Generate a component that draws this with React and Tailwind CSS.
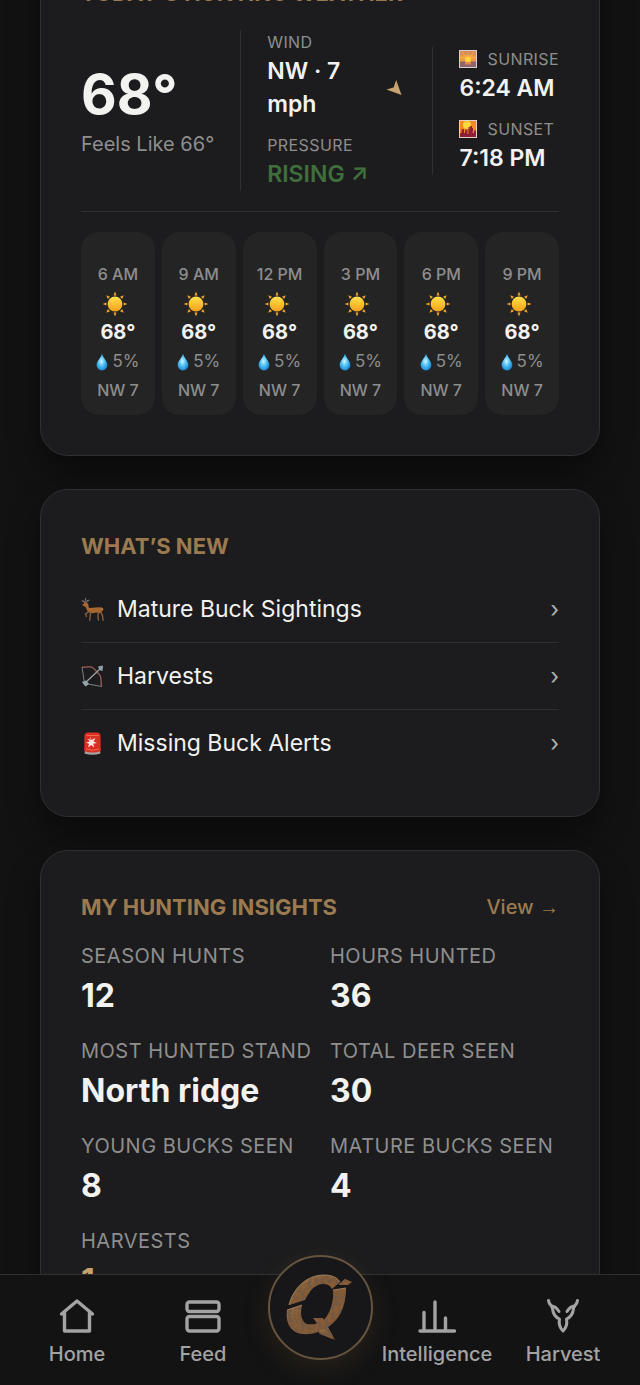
import React from 'react';

// --- PAGE DATA ---
const forecast = ['6 AM', '9 AM', '12 PM', '3 PM', '6 PM', '9 PM'].map((time) => ({
    time,
    temp: '68°',
    rain: '5%',
    wind: 'NW 7',
}));

const insights = [
    { label: 'Season Hunts', value: '12' },
    { label: 'Hours Hunted', value: '36' },
    { label: 'Most Hunted Stand', value: 'North ridge' },
    { label: 'Total Deer Seen', value: '30' },
    { label: 'Young Bucks Seen', value: '8' },
    { label: 'Mature Bucks Seen', value: '4' },
    { label: 'Harvests', value: '1', highlight: true },
];

// --- WEATHER ICONS ---
const SunIcon = () => (
    <svg viewBox="0 0 26 26" className="w-[26px] h-[26px] mr-1.5" aria-hidden="true">
        <defs>
            <linearGradient id="sun" x1="0" y1="0" x2="0" y2="1">
                <stop offset="0" stopColor="#ffe14a" />
                <stop offset="1" stopColor="#f5a01a" />
            </linearGradient>
        </defs>
        {[0, 45, 90, 135, 180, 225, 270, 315].map((angle) => (
            <path key={angle} d="M13 .6l1.5 3.8h-3z" fill="#f3a62b" transform={`rotate(${angle} 13 13)`} />
        ))}
        <circle cx="13" cy="13" r="7.4" fill="url(#sun)" />
    </svg>
);

const DropIcon = () => (
    <svg viewBox="0 0 12 18" className="w-3 h-[18px]" aria-hidden="true">
        <defs>
            <radialGradient id="drop" cx=".45" cy=".45" r=".6">
                <stop offset="0" stopColor="#d3f5ff" />
                <stop offset=".5" stopColor="#4fc0f5" />
                <stop offset="1" stopColor="#1683cf" />
            </radialGradient>
        </defs>
        <path d="M6 .8C7 4.800 11.400 8.200 11.400 12A5.400 5.400 0 0 1 .6 12C.6 8.200 5 4.800 6 .8z" fill="url(#drop)" />
    </svg>
);

const SunriseIcon = () => (
    <svg viewBox="0 0 18 18" className="w-[18px] h-[18px]" aria-hidden="true">
        <rect width="18" height="18" fill="#d8cfd0" />
        <rect x="1" y="1" width="16" height="5" fill="#d98a55" />
        <rect x="1" y="5" width="16" height="7" fill="#f09a3c" />
        <rect x="1" y="11.500" width="16" height="5.500" fill="#8f6670" />
        <path d="M9 9L3 2M9 9V2M9 9l6-7M9 9L2 7M9 9l7-2" stroke="#f7b765" strokeWidth=".8" />
        <circle cx="9" cy="9.500" r="3" fill="#ffd23f" />
        <rect x="6" y="12" width="6" height="2.500" fill="#e28a4a" />
    </svg>
);

const SunsetIcon = () => (
    <svg viewBox="0 0 18 18" className="w-[18px] h-[18px]" aria-hidden="true">
        <rect width="18" height="18" fill="#e5cfc4" />
        <rect x="1" y="1" width="16" height="16" fill="#f08a24" />
        <circle cx="8" cy="5" r="4" fill="#ffd83d" />
        <path d="M1 17v-4h1.500V9H5v4h1V9.500h2.500V14h1V7h1.500V6h2v2h1v5h1v-2.500h2V17z" fill="#8e2036" />
        <path d="M6 10h2M10 8h1.500M3 10h1M13 12h1" stroke="#d5562f" />
    </svg>
);

const WindArrow = () => (
    <svg viewBox="0 0 16 16" className="w-4 h-4 shrink-0" aria-hidden="true">
        <path d="M10.200 0L15.500 15 .4 9.600l7.200-2.200z" fill="#c8a26c" />
    </svg>
);

// --- LIST ICONS ---
const DeerIcon = () => (
    <svg viewBox="0 0 23 23" className="w-[23px] h-[23px]" fill="none" aria-hidden="true">
        <path d="M4 5L2 2.500M4 5l.5-4.500M5 5l2-3M2.500 3.500L1 3M6 3l2-.5" stroke="#8c8078" strokeWidth=".9" strokeLinecap="round" />
        <path d="M1 7l3-2.500 3 1L8 10l10-.8c2.500 0 3.500 1.500 3.600 3.500l-2.300 2.500-4-.8-4 .8-4.500-1.400L4.500 9z" fill="#a9672f" />
        <path d="M8 13.500L4.500 16l1 2.500M9.500 14l-.7 8M17.500 14l-.5 3.500.3 4.500M19.500 13.500l2 4 .5 4.500" stroke="#94623d" strokeWidth="1.300" strokeLinecap="round" />
        <path d="M17 22h.6M22 22h.6M8.500 22h.6" stroke="#6d5d52" strokeWidth="1.500" />
        <path d="M20.500 9.500l1.500 2.500" stroke="#d1a77c" />
    </svg>
);

const BowIcon = () => (
    <svg viewBox="0 0 23 23" className="w-[23px] h-[23px]" fill="none" aria-hidden="true">
        <path d="M1 2l2.500 16.500L21 21.500" stroke="#7b8286" strokeWidth="1" />
        <path d="M1 2c4 .8 7.500-1.500 11 1s3 3.500 6 6 1.500 6 2.500 12.500" stroke="#8b5650" strokeWidth="1.500" />
        <path d="M3.500 18.500L20 3" stroke="#a0a3a4" strokeWidth="1.200" />
        <path d="M17 1.500L22 .5 21.500 6l-3-1zM1 17l4-1.500 3 3L5 21.500l-1.500-1z" fill="#93a3ad" />
    </svg>
);

const SirenIcon = () => (
    <svg viewBox="0 0 23 23" className="w-[23px] h-[23px]" aria-hidden="true">
        <path d="M4 19h15l.5 2.500q-8 2.500-16 0z" fill="#a7a3a3" />
        <path d="M3.500 4Q3.500 .5 7 .5h9Q19.500 .5 19.500 4l.3 15q-8 3-16.600 0z" fill="#dc2f23" />
        <path d="M5.500 3.500h12M5 17q6.500 2.500 13 0" stroke="#f56a51" fill="none" />
        <path d="M9.500 4.500l1 3.500 4-2-2 3.500 3.500 1.500-3.800.8 1 3.700-3-2.500-3 2.500.8-3.700L5 10.500l3.500-.7-1.500-3 2.500 1.200z" fill="#ffe6df" />
    </svg>
);

const updates = [
    { title: 'Mature Buck Sightings', icon: <DeerIcon /> },
    { title: 'Harvests', icon: <BowIcon /> },
    { title: 'Missing Buck Alerts', icon: <SirenIcon /> },
];

// --- NAV ICONS ---
const navIconProps = {
    viewBox: '0 0 40 40',
    className: 'w-10 h-10',
    fill: 'none',
    stroke: 'currentColor',
    strokeWidth: 3.4,
    strokeLinecap: 'round',
    strokeLinejoin: 'round',
    'aria-hidden': true,
};

const HomeIcon = () => (
    <svg {...navIconProps}>
        <path d="M4.500 18L20 5 35.500 18M7.500 16.500V35h25V16.500" />
    </svg>
);

const FeedIcon = () => (
    <svg {...navIconProps}>
        <rect x="4" y="6" width="32" height="9.500" rx="2.500" />
        <rect x="4" y="20.500" width="32" height="14.500" rx="2.500" />
    </svg>
);

const ChartIcon = () => (
    <svg {...navIconProps}>
        <path d="M3 35h34.500M7 35V16.500M18 35V6M28.500 35V22" />
    </svg>
);

const BuckIcon = () => (
    <svg {...navIconProps} strokeWidth={3}>
        <path d="M5.500 4.500C6 9 9 9 9.500 12.500 10 18 12 21 16.500 23c-1 5 .5 9 3.500 12 3-3 4.500-7 3.500-12 4.500-2 6.500-5 7-10.500C31 9 34 9 34.500 4.500" />
        <path d="M8.500 10c3.500 0 5 1.500 7.500 5.500M31.500 10c-3.500 0-5 1.500-7.500 5.500" />
    </svg>
);

const BrandMark = () => (
    <svg viewBox="0 0 70 70" className="w-[70px] h-[70px]" aria-hidden="true">
        <defs>
            <linearGradient id="bronze" x1="0" y1="0" x2="1" y2="1">
                <stop offset="0" stopColor="#a87d52" />
                <stop offset=".4" stopColor="#855c37" />
                <stop offset=".7" stopColor="#8b5c35" />
                <stop offset="1" stopColor="#6b4024" />
            </linearGradient>
            <filter id="worn" x="0" y="0" width="1" height="1">
                <feTurbulence type="fractalNoise" baseFrequency=".3" numOctaves="3" seed="4" result="noise" />
                <feColorMatrix in="noise" values="0 0 0 0 .16  0 0 0 0 .1  0 0 0 0 .06  0 0 0 6 -2.7" result="spots" />
                <feComposite in="spots" in2="SourceGraphic" operator="in" result="patches" />
                <feMerge>
                    <feMergeNode in="SourceGraphic" />
                    <feMergeNode in="patches" />
                </feMerge>
            </filter>
        </defs>
        <g fill="url(#bronze)" filter="url(#worn)">
            <path d="M4 32C8 16 21 2 39 2c7 0 13 2 16 7l-8 7c-2-4-5-5-9-5-9 0-14 8-18 16z" />
            <path d="M54 11l6-5 7 3-4 3h-9z" />
            <path d="M48 17l13-2c0 14-4 27-13 35-8 8-20 12-31 11C6 60 0 50 2 37l15-5c-2 8-1 15 3 18 3 2 8 2 12 0l-4-5h10l1 2c7-8 10-19 9-30z" />
            <path d="M33 58l10-4 7 13-15-6z" />
        </g>
        <path d="M4 32C8 16 21 2 39 2c7 0 13 2 16 7M48 17l13-2M2 37l15-5" fill="none" stroke="#b08a60" strokeWidth=".8" />
    </svg>
);

// --- SHARED PIECES ---
const Card = ({ children }) => (
    <section className="rounded-[28px] border border-[#303031] bg-[#1c1c1e] p-10 shadow-[0_16px_32px_rgba(0,0,0,0.45)]">
        {children}
    </section>
);

const CardTitle = ({ children }) => (
    <h2 className="text-[22px] leading-[33px] font-bold uppercase text-[#9b7a4f]">{children}</h2>
);

const Reading = ({ label, icon, children }) => (
    <div>
        <div className="flex items-center gap-2.5 text-base leading-[25px] uppercase tracking-wide text-[#8e8e8e]">
            {icon}
            {label}
        </div>
        <div className="text-[23px] leading-[33px] font-semibold text-[#f2f2f0]">{children}</div>
    </div>
);

const NavItem = ({ label, icon }) => (
    <a href="#" className="flex-1 flex flex-col items-center pt-[21px] text-xl leading-7 font-medium text-[#a3a3a3]">
        {icon}
        <span className="mt-1">{label}</span>
    </a>
);

const App = () => {
    return (
        <div className="h-screen flex flex-col overflow-hidden bg-[#121212] font-['Inter',sans-serif]">

            {/* Feed, scrolled a little past its first card's heading */}
            <main className="flex-1 min-h-0 overflow-hidden px-10">
                <div className="-mt-16 flex flex-col gap-[33px]">

                    {/* Weather */}
                    <Card>
                        <CardTitle>Today’s Hunting Weather</CardTitle>

                        <div className="mt-5 pb-5 flex items-center gap-[26px] border-b border-[#303031]">
                            <div className="shrink-0">
                                <div className="text-[55px] leading-[60px] font-bold text-[#f2f2f0]">68°</div>
                                <div className="mt-1.5 text-xl leading-7 text-[#8e8e8e]">Feels Like 66°</div>
                            </div>

                            <div className="flex-1 flex flex-col gap-3 border-l border-[#303031] pl-[26px]">
                                <Reading label="Wind">
                                    <div className="flex items-center justify-between pr-1">
                                        <span className="w-min min-w-20">NW · 7 mph</span>
                                        <WindArrow />
                                    </div>
                                </Reading>
                                <Reading label="Pressure">
                                    <span className="whitespace-nowrap text-[#3f6f3b]">RISING ↗</span>
                                </Reading>
                            </div>

                            <div className="shrink-0 flex flex-col gap-3 border-l border-[#303031] pl-[26px]">
                                <Reading label="Sunrise" icon={<SunriseIcon />}>6:24 AM</Reading>
                                <Reading label="Sunset" icon={<SunsetIcon />}>7:18 PM</Reading>
                            </div>
                        </div>

                        <div className="mt-5 grid grid-cols-6 gap-[7px]">
                            {forecast.map((hour) => (
                                <div
                                    key={hour.time}
                                    className="flex flex-col items-center rounded-[18px] bg-[#242425] pt-7 pb-2.5 text-base leading-[29px] text-[#8e8e8e]"
                                >
                                    <div className="font-medium">{hour.time}</div>
                                    <div className="h-[29px] flex items-center"><SunIcon /></div>
                                    <div className="text-xl leading-[29px] font-bold text-[#f2f2f0]">{hour.temp}</div>
                                    <div className="flex items-center gap-1 text-[17px]"><DropIcon />{hour.rain}</div>
                                    <div className="font-medium">{hour.wind}</div>
                                </div>
                            ))}
                        </div>
                    </Card>

                    {/* What's new */}
                    <Card>
                        <CardTitle>What’s New</CardTitle>
                        <ul className="mt-[13px] divide-y divide-[#303031]">
                            {updates.map((item) => (
                                <li key={item.title}>
                                    <a href="#" className="flex items-center gap-[13px] h-[66px] text-[23px] text-[#f2f2f0]">
                                        {item.icon}
                                        <span className="flex-1">{item.title}</span>
                                        <span className="text-[#b0b0b0]">›</span>
                                    </a>
                                </li>
                            ))}
                        </ul>
                    </Card>

                    {/* Insights */}
                    <Card>
                        <div className="flex items-center justify-between">
                            <CardTitle>My Hunting Insights</CardTitle>
                            <a href="#" className="text-xl leading-[33px] font-medium text-[#9b7a4f]">
                                View <span className="font-['Liberation_Sans',sans-serif] font-normal">→</span>
                            </a>
                        </div>
                        <dl className="mt-4 grid grid-cols-2 gap-x-5 gap-y-[15px]">
                            {insights.map((item) => (
                                <div key={item.label}>
                                    <dt className="whitespace-nowrap text-xl leading-8 uppercase tracking-wide text-[#8e8e8e]">
                                        {item.label}
                                    </dt>
                                    <dd className={`text-[32px] leading-[48px] font-bold ${item.highlight ? 'text-[#c8a26c]' : 'text-[#f2f2f0]'}`}>
                                        {item.value}
                                    </dd>
                                </div>
                            ))}
                        </dl>
                    </Card>
                </div>
            </main>

            {/* Bottom navigation */}
            <nav className="h-[111px] shrink-0 flex border-t border-[#303031] bg-[#131314] px-3.5">
                <NavItem label="Home" icon={<HomeIcon />} />
                <NavItem label="Feed" icon={<FeedIcon />} />
                <div className="w-[108px] flex justify-center">
                    <button
                        type="button"
                        aria-label="Open menu"
                        className="relative -mt-5 w-[105px] h-[105px] rounded-full border-2 border-[#66543e] bg-[#17171a] flex items-center justify-center shadow-[0_8px_28px_rgba(155,110,50,0.16)]"
                    >
                        <BrandMark />
                    </button>
                </div>
                <NavItem label="Intelligence" icon={<ChartIcon />} />
                <NavItem label="Harvest" icon={<BuckIcon />} />
            </nav>
        </div>
    );
};

export default App;
